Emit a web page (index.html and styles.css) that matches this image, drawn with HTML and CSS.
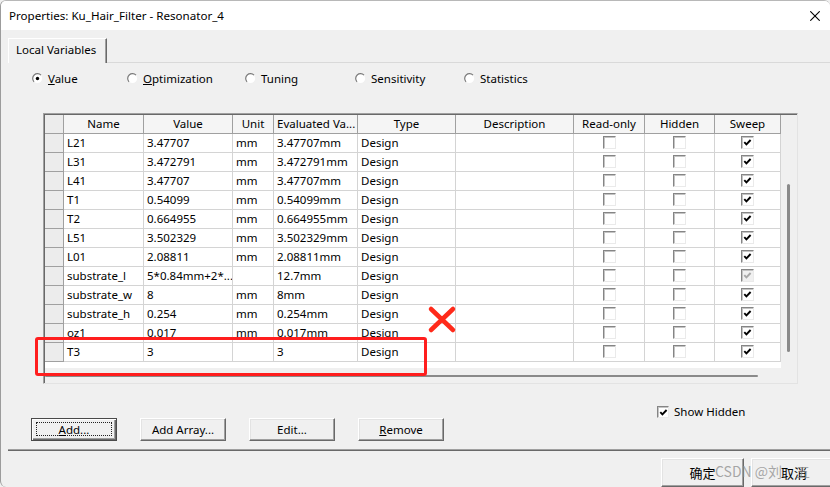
FILE: index.html
```html
<!DOCTYPE html>
<html>
<head>
<meta charset="utf-8">
<title>Properties: Ku_Hair_Filter - Resonator_4</title>
<link rel="stylesheet" href="styles.css">
</head>
<body>
<div class="window">
  <div class="titlebar">
    <span class="title">Properties: Ku_Hair_Filter - Resonator_4</span>
    <svg class="close" width="10" height="10" viewBox="0 0 10 10"><path d="M0.3 0.3L9.7 9.7M9.7 0.3L0.3 9.7" stroke="#000" stroke-width="1.1" fill="none"/></svg>
  </div>
  <div class="client">
    <div class="tabstrip"><div class="tab">Local Variables</div></div>
    <div class="panel">
      <div class="radios">
        <label class="radio r1"><svg class="rb" width="11" height="11" viewBox="0 0 11 11"><circle cx="5.5" cy="5.5" r="4.6" fill="#fff"/><path d="M9 2.2A4.6 4.6 0 0 0 2 8.8" stroke="#7a7a7a" stroke-width="1.2" fill="none"/><circle cx="5.5" cy="5.5" r="1.7" fill="#000"/></svg><span><u>V</u>alue</span></label>
        <label class="radio r2"><svg class="rb" width="11" height="11" viewBox="0 0 11 11"><circle cx="5.5" cy="5.5" r="4.6" fill="#fff"/><path d="M9 2.2A4.6 4.6 0 0 0 2 8.8" stroke="#7a7a7a" stroke-width="1.2" fill="none"/></svg><span><u>O</u>ptimization</span></label>
        <label class="radio r3"><svg class="rb" width="11" height="11" viewBox="0 0 11 11"><circle cx="5.5" cy="5.5" r="4.6" fill="#fff"/><path d="M9 2.2A4.6 4.6 0 0 0 2 8.8" stroke="#7a7a7a" stroke-width="1.2" fill="none"/></svg><span>Tuning</span></label>
        <label class="radio r4"><svg class="rb" width="11" height="11" viewBox="0 0 11 11"><circle cx="5.5" cy="5.5" r="4.6" fill="#fff"/><path d="M9 2.2A4.6 4.6 0 0 0 2 8.8" stroke="#7a7a7a" stroke-width="1.2" fill="none"/></svg><span>Sensitivity</span></label>
        <label class="radio r5"><svg class="rb" width="11" height="11" viewBox="0 0 11 11"><circle cx="5.5" cy="5.5" r="4.6" fill="#fff"/><path d="M9 2.2A4.6 4.6 0 0 0 2 8.8" stroke="#7a7a7a" stroke-width="1.2" fill="none"/></svg><span>Statistics</span></label>
      </div>

      <div class="frame">
        <div class="fmain">
          <div class="gridcol">
            <div class="row head">
              <div class="rh"></div>
              <div class="h">Name</div>
              <div class="h">Value</div>
              <div class="h">Unit</div>
              <div class="h left">Evaluated Va...</div>
              <div class="h">Type</div>
              <div class="h">Description</div>
              <div class="h">Read-only</div>
              <div class="h">Hidden</div>
              <div class="h">Sweep</div>
            </div>
            <div class="row"><div class="rh"></div><div class="c">L21</div><div class="c">3.47707</div><div class="c">mm</div><div class="c">3.47707mm</div><div class="c">Design</div><div class="c"></div><div class="c cb"><span class="chk"></span></div><div class="c cb"><span class="chk"></span></div><div class="c cb"><span class="chk on"><svg width="9" height="9" viewBox="0 0 9 9"><path d="M1.3 4.2L3.4 6.4L7.6 2" stroke="#000" stroke-width="1.9" fill="none"/></svg></span></div></div>
            <div class="row"><div class="rh"></div><div class="c">L31</div><div class="c">3.472791</div><div class="c">mm</div><div class="c">3.472791mm</div><div class="c">Design</div><div class="c"></div><div class="c cb"><span class="chk"></span></div><div class="c cb"><span class="chk"></span></div><div class="c cb"><span class="chk on"><svg width="9" height="9" viewBox="0 0 9 9"><path d="M1.3 4.2L3.4 6.4L7.6 2" stroke="#000" stroke-width="1.9" fill="none"/></svg></span></div></div>
            <div class="row"><div class="rh"></div><div class="c">L41</div><div class="c">3.47707</div><div class="c">mm</div><div class="c">3.47707mm</div><div class="c">Design</div><div class="c"></div><div class="c cb"><span class="chk"></span></div><div class="c cb"><span class="chk"></span></div><div class="c cb"><span class="chk on"><svg width="9" height="9" viewBox="0 0 9 9"><path d="M1.3 4.2L3.4 6.4L7.6 2" stroke="#000" stroke-width="1.9" fill="none"/></svg></span></div></div>
            <div class="row"><div class="rh"></div><div class="c">T1</div><div class="c">0.54099</div><div class="c">mm</div><div class="c">0.54099mm</div><div class="c">Design</div><div class="c"></div><div class="c cb"><span class="chk"></span></div><div class="c cb"><span class="chk"></span></div><div class="c cb"><span class="chk on"><svg width="9" height="9" viewBox="0 0 9 9"><path d="M1.3 4.2L3.4 6.4L7.6 2" stroke="#000" stroke-width="1.9" fill="none"/></svg></span></div></div>
            <div class="row"><div class="rh"></div><div class="c">T2</div><div class="c">0.664955</div><div class="c">mm</div><div class="c">0.664955mm</div><div class="c">Design</div><div class="c"></div><div class="c cb"><span class="chk"></span></div><div class="c cb"><span class="chk"></span></div><div class="c cb"><span class="chk on"><svg width="9" height="9" viewBox="0 0 9 9"><path d="M1.3 4.2L3.4 6.4L7.6 2" stroke="#000" stroke-width="1.9" fill="none"/></svg></span></div></div>
            <div class="row"><div class="rh"></div><div class="c">L51</div><div class="c">3.502329</div><div class="c">mm</div><div class="c">3.502329mm</div><div class="c">Design</div><div class="c"></div><div class="c cb"><span class="chk"></span></div><div class="c cb"><span class="chk"></span></div><div class="c cb"><span class="chk on"><svg width="9" height="9" viewBox="0 0 9 9"><path d="M1.3 4.2L3.4 6.4L7.6 2" stroke="#000" stroke-width="1.9" fill="none"/></svg></span></div></div>
            <div class="row"><div class="rh"></div><div class="c">L01</div><div class="c">2.08811</div><div class="c">mm</div><div class="c">2.08811mm</div><div class="c">Design</div><div class="c"></div><div class="c cb"><span class="chk"></span></div><div class="c cb"><span class="chk"></span></div><div class="c cb"><span class="chk on"><svg width="9" height="9" viewBox="0 0 9 9"><path d="M1.3 4.2L3.4 6.4L7.6 2" stroke="#000" stroke-width="1.9" fill="none"/></svg></span></div></div>
            <div class="row"><div class="rh"></div><div class="c">substrate_l</div><div class="c">5*0.84mm+2*...</div><div class="c"></div><div class="c">12.7mm</div><div class="c">Design</div><div class="c"></div><div class="c cb"><span class="chk"></span></div><div class="c cb"><span class="chk"></span></div><div class="c cb"><span class="chk on dis"><svg width="9" height="9" viewBox="0 0 9 9"><path d="M1.3 4.2L3.4 6.4L7.6 2" stroke="#a8a8a8" stroke-width="1.9" fill="none"/></svg></span></div></div>
            <div class="row"><div class="rh"></div><div class="c">substrate_w</div><div class="c">8</div><div class="c">mm</div><div class="c">8mm</div><div class="c">Design</div><div class="c"></div><div class="c cb"><span class="chk"></span></div><div class="c cb"><span class="chk"></span></div><div class="c cb"><span class="chk on"><svg width="9" height="9" viewBox="0 0 9 9"><path d="M1.3 4.2L3.4 6.4L7.6 2" stroke="#000" stroke-width="1.9" fill="none"/></svg></span></div></div>
            <div class="row"><div class="rh"></div><div class="c">substrate_h</div><div class="c">0.254</div><div class="c">mm</div><div class="c">0.254mm</div><div class="c">Design</div><div class="c"></div><div class="c cb"><span class="chk"></span></div><div class="c cb"><span class="chk"></span></div><div class="c cb"><span class="chk on"><svg width="9" height="9" viewBox="0 0 9 9"><path d="M1.3 4.2L3.4 6.4L7.6 2" stroke="#000" stroke-width="1.9" fill="none"/></svg></span></div></div>
            <div class="row"><div class="rh"></div><div class="c">oz1</div><div class="c">0.017</div><div class="c">mm</div><div class="c">0.017mm</div><div class="c">Design</div><div class="c"></div><div class="c cb"><span class="chk"></span></div><div class="c cb"><span class="chk"></span></div><div class="c cb"><span class="chk on"><svg width="9" height="9" viewBox="0 0 9 9"><path d="M1.3 4.2L3.4 6.4L7.6 2" stroke="#000" stroke-width="1.9" fill="none"/></svg></span></div></div>
            <div class="row"><div class="rh"></div><div class="c">T3</div><div class="c">3</div><div class="c"></div><div class="c">3</div><div class="c">Design</div><div class="c"></div><div class="c cb"><span class="chk"></span></div><div class="c cb"><span class="chk"></span></div><div class="c cb"><span class="chk on"><svg width="9" height="9" viewBox="0 0 9 9"><path d="M1.3 4.2L3.4 6.4L7.6 2" stroke="#000" stroke-width="1.9" fill="none"/></svg></span></div></div>
            <div class="tail"></div>
          </div>
          <div class="vscroll"><div class="vthumb"></div></div>
        </div>
        <div class="hscroll"><div class="hthumb"></div></div>
      </div>

      <div class="showrow">
        <span class="chk on small"><svg width="9" height="9" viewBox="0 0 9 9"><path d="M1.3 4.2L3.4 6.4L7.6 2" stroke="#000" stroke-width="1.9" fill="none"/></svg></span>
        <span>Show Hidden</span>
      </div>

      <div class="buttons">
        <button class="btn default"><span class="focus"><u>A</u>dd...</span></button>
        <button class="btn">Add Array...</button>
        <button class="btn">Edit...</button>
        <button class="btn"><u>R</u>emove</button>
      </div>
    </div>

    <div class="footer">
      <button class="btn big ok">确定</button>
      <button class="btn big cancel">取消</button>
    </div>
  </div>
</div>

<div class="annot-rect"></div>
<svg class="annot-x" width="30" height="30" viewBox="0 0 30 30"><path d="M4 4L26 25M26 4L4 25" stroke="#ff2a1a" stroke-width="4.5" stroke-linecap="round" fill="none"/></svg>
<div class="watermark">CSDN @刘　五</div>
</body>
</html>
```

FILE: styles.css
```css
* { box-sizing: border-box; }

html, body {
  margin: 0;
  padding: 0;
}

body {
  position: relative;
  width: 830px;
  height: 487px;
  overflow: hidden;
  background: #f0f0f0;
  font-family: "Noto Sans", "Open Sans", sans-serif;
  font-size: 11.5px;
  color: #000;
}

.window {
  height: 487px;
  border-left: 1px solid #9c9c9c;
  border-top: 1px solid #b8b8b8;
  border-radius: 6px 6px 0 6px;
  background: #f0f0f0;
  overflow: hidden;
}

/* ---------- title bar ---------- */
.titlebar {
  height: 29px;
  background: #fff;
  display: flex;
  align-items: center;
  justify-content: space-between;
  padding: 0 10px 0 8px;
}

.title {
  font-size: 11.6px;
  line-height: 14px;
}

.close { display: block; }

/* ---------- tab ---------- */
.tabstrip {
  display: flex;
  padding: 8px 0 0 7px;
}

.tab {
  position: relative;
  z-index: 1;
  width: 99px;
  height: 25px;
  margin-bottom: -1px;
  background: #f0f0f0;
  border-top: 1px solid #fff;
  border-left: 1px solid #fff;
  border-right: 1px solid #696969;
  box-shadow: inset -1px 0 0 #a0a0a0;
  padding-left: 7px;
  line-height: 22px;
  white-space: nowrap;
}

.panel {
  margin-left: 7px;
  border-top: 1px solid #d9d9d9;
  border-bottom: 1px solid #a0a0a0;
  box-shadow: 0 1px 0 #696969;
  padding-bottom: 8px;
}

/* ---------- radios ---------- */
.radios {
  display: flex;
  align-items: center;
  height: 15px;
  margin-top: 8px;
  padding-left: 24px;
}

.radio {
  display: flex;
  align-items: center;
  white-space: nowrap;
}

.rb {
  display: block;
  margin-right: 5px;
  flex: none;
}

.r1 { width: 95px; }
.r2 { width: 118px; }
.r3 { width: 110px; }
.r4 { width: 109px; }

/* ---------- grid frame ---------- */
.frame {
  margin: 27px 0 0 35px;
  width: 755px;
  height: 271px;
  border-top: 1px solid #a0a0a0;
  border-left: 1px solid #a0a0a0;
  border-right: 1px solid #e3e3e3;
  border-bottom: 1px solid #e3e3e3;
  padding: 1px 0 0 1px;
  box-shadow: inset 1px 1px 0 #696969;
  display: flex;
  flex-direction: column;
}

.fmain {
  display: flex;
  height: 254px;
}

.gridcol {
  width: 736px;
}

.row {
  display: grid;
  grid-template-columns: 19px 80px 89px 41px 84px 98px 118px 71px 70px 66px;
  height: 19px;
}

.row > div {
  height: 19px;
  line-height: 18px;
  white-space: nowrap;
  overflow: hidden;
}

.rh {
  background: #ececec;
  border-right: 1px solid #a0a0a0;
  border-bottom: 1px solid #a0a0a0;
}

.h {
  background: #f5f5f5;
  border-right: 1px solid #a0a0a0;
  border-bottom: 1px solid #a0a0a0;
  text-align: center;
}

.h.left {
  text-align: left;
  padding-left: 3px;
}

.c {
  background: #fff;
  border-right: 1px solid #d4d4d4;
  border-bottom: 1px solid #d4d4d4;
  padding-left: 3px;
}

.cb {
  display: flex;
  align-items: center;
  justify-content: center;
  padding-left: 0;
}

.chk {
  display: flex;
  align-items: center;
  justify-content: center;
  width: 13px;
  height: 13px;
  background: #fff;
  border-top: 1px solid #858585;
  border-left: 1px solid #858585;
  border-right: 1px solid #eaeaea;
  border-bottom: 1px solid #eaeaea;
  box-shadow: inset 1px 1px 0 #c4c4c4;
  margin-top: -1px;
}

.chk svg { display: block; }

.chk.dis { background: #f0f0f0; }

.chk.small {
  width: 12px;
  height: 12px;
  margin-top: 1px;
}

.tail {
  height: 6px;
  background: #fff;
}

.vscroll {
  width: 16px;
}

.vthumb {
  margin: 69px 0 0 6px;
  width: 3px;
  height: 168px;
  background: #8a8a8a;
  border-radius: 1.5px;
}

.hscroll {
  height: 14px;
}

.hthumb {
  margin-top: 6px;
  width: 713px;
  height: 2px;
  background: #8a8a8a;
  border-radius: 1px;
}

/* ---------- show hidden ---------- */
.showrow {
  display: flex;
  align-items: center;
  gap: 5px;
  height: 13px;
  margin-top: 21px;
  padding-left: 649px;
  white-space: nowrap;
}

/* ---------- buttons ---------- */
.buttons {
  display: flex;
  gap: 23px;
  padding-left: 23px;
}

.btn {
  width: 86px;
  height: 23px;
  padding: 0;
  margin: 0;
  background: #f0f0f0;
  border: 1px solid;
  border-color: #fff #696969 #696969 #fff;
  box-shadow: inset -1px -1px 0 #a0a0a0, inset 1px 1px 0 #e3e3e3;
  font-family: "Noto Sans", "Open Sans", sans-serif;
  font-size: 11.5px;
  color: #000;
  line-height: 19px;
}

.btn.default {
  border-color: #4a4a4a;
  box-shadow: inset 1px 1px 0 #fff, inset -1px -1px 0 #696969, inset -2px -2px 0 #a0a0a0;
  padding: 3px 4px 4px 4px;
}

.focus {
  display: block;
  height: 100%;
  border: 1px dotted #222;
  line-height: 13px;
}

.footer {
  display: flex;
  gap: 7px;
  padding: 8px 0 0 660px;
}

.btn.big {
  height: 29px;
  font-family: "Noto Sans CJK SC", "Noto Sans", sans-serif;
  font-size: 13px;
  line-height: 24px;
  flex: none;
}

.btn.ok { width: 83px; }
.btn.cancel { width: 86px; }

/* ---------- annotations (overlay) ---------- */
.annot-rect {
  position: absolute;
  left: 35px;
  top: 337px;
  width: 392px;
  height: 39px;
  border: 3px solid #ff1e1e;
  border-radius: 3px;
}

.annot-x {
  position: absolute;
  left: 427px;
  top: 305px;
}

.watermark {
  position: absolute;
  left: 715px;
  top: 463px;
  font-family: "Noto Sans CJK SC", "Noto Sans", sans-serif;
  font-size: 14px;
  line-height: 16px;
  color: rgba(140, 140, 140, 0.75);
  white-space: nowrap;
  pointer-events: none;
}
```
